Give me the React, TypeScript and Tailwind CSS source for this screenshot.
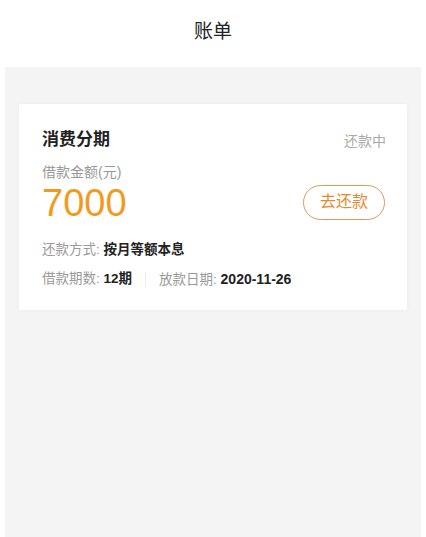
export default function App() {
  const font = { fontFamily: '"Liberation Sans", "Noto Sans CJK SC", sans-serif' };
  return (
    <div className="w-[426px] h-[537px] bg-white flex flex-col" style={font}>
      <div className="h-[67px] flex items-center justify-center shrink-0">
        <span className="text-[19px] leading-[24px] text-[#222] mt-[-3px]">账单</span>
      </div>
      <div className="mx-[5px] flex-1 bg-[#f4f4f4] pt-[37px] px-[14px]">
        <div className="h-[206px] bg-white rounded-[2px] shadow-[0_0_4px_rgba(0,0,0,0.04)] px-[23px] pt-[24px] flex flex-col">
          <div className="flex items-center justify-between h-[24px]">
            <span className="text-[17px] font-bold text-[#222]">消费分期</span>
            <span className="text-[14px] text-[#aaa] mt-[3px] mr-[-2px]">还款中</span>
          </div>
          <div className="mt-[10px] h-[20px] leading-[20px] text-[14px] text-[#999]">借款金额(元)</div>
          <div className="h-[40px] flex items-center justify-between">
            <span className="text-[38px] leading-[40px] text-[#f39a1e] mt-[1px]">7000</span>
            <div className="w-[82px] h-[35px] rounded-full border-[1.5px] border-[#e5965a] flex items-center justify-center text-[16px] text-[#e38a2e] mr-[-1px]">
              去还款
            </div>
          </div>
          <div className="mt-[18px] h-[20px] leading-[20px] text-[13.5px] text-[#999]">
            还款方式: <span className="text-[#222] font-bold">按月等额本息</span>
          </div>
          <div className="mt-[9px] h-[20px] leading-[20px] text-[13.5px] text-[#999] flex items-center">
            <span>
              借款期数: <span className="text-[#222] font-bold">12期</span>
            </span>
            <span className="mx-[13px] w-px h-[15px] bg-[#ececec]"></span>
            <span>
              放款日期: <span className="text-[#222] font-bold text-[14px]">2020-11-26</span>
            </span>
          </div>
        </div>
      </div>
    </div>
  );
}
